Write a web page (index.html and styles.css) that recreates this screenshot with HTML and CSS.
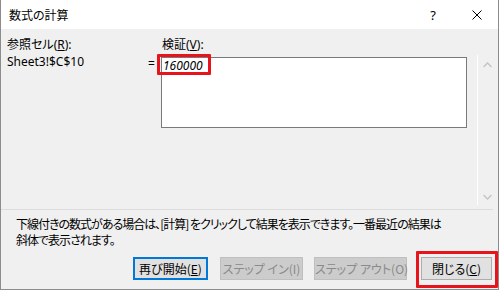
FILE: index.html
```html
<!DOCTYPE html>
<html lang="ja">
<head>
<meta charset="utf-8">
<title>数式の計算</title>
<link rel="stylesheet" href="styles.css">
</head>
<body>
<div class="window">
  <div class="titlebar">
    <span class="title">数式の計算</span>
    <span class="help">?</span>
    <span class="close">
      <svg width="10" height="10" viewBox="0 0 10 10"><path d="M0.5 0.5 L9.5 9.5 M9.5 0.5 L0.5 9.5" stroke="#000" stroke-width="1" fill="none"/></svg>
    </span>
  </div>
  <div class="content">
    <div class="top">
      <div class="ref">
        <div class="label">参照セル(<u>R</u>):</div>
        <div class="value">Sheet3!$C$10</div>
      </div>
      <div class="eq">=</div>
      <div class="eval">
        <div class="label lbl-eval">検証(<u>V</u>):</div>
        <div class="box">
          <span class="result">160000</span>
          <span class="mark mark-result"></span>
        </div>
      </div>
      <div class="scroll">
        <svg width="9" height="6" viewBox="0 0 9 6"><path d="M0.5 5 L4.5 1 L8.5 5" stroke="#c4c4c4" stroke-width="1.4" fill="none"/></svg>
        <svg width="9" height="6" viewBox="0 0 9 6"><path d="M0.5 1 L4.5 5 L8.5 1" stroke="#c4c4c4" stroke-width="1.4" fill="none"/></svg>
      </div>
    </div>
    <div class="sep"></div>
    <p class="desc">下線付きの数式がある場合は、[計算] をクリックして結果を表示できます。一番最近の結果は<br>斜体で表示されます。</p>
    <div class="buttons">
      <button class="btn btn-default btn-restart">再び開始(<u>E</u>)</button>
      <button class="btn btn-disabled btn-in">ステップ イン(I)</button>
      <button class="btn btn-disabled btn-out">ステップ アウト(O)</button>
      <button class="btn btn-close">閉じる(<u>C</u>)<span class="mark mark-close"></span></button>
    </div>
  </div>
</div>
</body>
</html>
```

FILE: styles.css
```css
html, body {
  margin: 0;
  padding: 0;
  background: #ffffff;
}

body {
  font-family: "Noto Sans", "Noto Sans CJK JP", sans-serif;
  font-size: 12px;
  color: #000;
  font-feature-settings: "palt";
}

.window {
  width: 499px;
  height: 290px;
  box-sizing: border-box;
  border-left: 1px solid #8c8c8c;
  border-right: 1px solid #8c8c8c;
  border-bottom: 1px solid #8c8c8c;
  display: flex;
  flex-direction: column;
  background: #f0f0f0;
}

.titlebar {
  height: 29px;
  flex: none;
  background: #ffffff;
  display: flex;
  align-items: center;
  padding-top: 1px;
  box-sizing: border-box;
}

.title {
  padding-left: 8px;
  font-family: "Noto Sans CJK JP", sans-serif;
  font-size: 12px;
  line-height: 16px;
}

.help {
  margin-left: auto;
  font-size: 13px;
  line-height: 16px;
}

.close {
  margin-left: 36px;
  margin-right: 16px;
  display: flex;
  width: 10px;
  height: 10px;
}

.content {
  flex: 1;
  padding: 8px 0 0 6px;
  display: flex;
  flex-direction: column;
}

.top {
  display: flex;
  height: 168px;
}

.label, .value {
  line-height: 16px;
  white-space: nowrap;
}

.ref {
  width: 141px;
}

.value {
  margin-top: 1px;
}

.eq {
  width: 13px;
  margin-top: 19px;
  line-height: 16px;
}

.eval {
  width: 306px;
}

.lbl-eval {
  padding-left: 1px;
}

.box {
  position: relative;
  margin-top: 4px;
  height: 71px;
  box-sizing: border-box;
  border: 1px solid #7a7a7a;
  background: #ffffff;
  padding: 1px 1px 0;
}

.result {
  display: block;
  font-style: italic;
  line-height: 14px;
}

.mark {
  position: absolute;
  box-sizing: border-box;
  border: 3px solid #e8141c;
  border-radius: 1px;
}

.mark-result {
  left: -5px;
  top: -4px;
  width: 54px;
  height: 21px;
}

.scroll {
  margin-left: 10px;
  margin-top: 18px;
  width: 17px;
  height: 150px;
  box-sizing: border-box;
  border-left: 1px solid #ffffff;
  display: flex;
  flex-direction: column;
  justify-content: space-between;
  align-items: center;
  padding: 7px 0 5px 2px;
}

.sep {
  height: 1px;
  margin: 4px 5px 0 -6px;
  background: #dcdcdc;
}

.desc {
  margin: 6px 0 0 9px;
  line-height: 16px;
  font-family: "Noto Sans CJK JP", sans-serif;
  letter-spacing: -1px;
  white-space: nowrap;
}

.buttons {
  display: flex;
  justify-content: flex-end;
  margin-top: 9px;
  padding-right: 6px;
}

.btn {
  height: 23px;
  box-sizing: border-box;
  padding: 0;
  font-family: "Noto Sans CJK JP", sans-serif;
  font-size: 12px;
  font-feature-settings: "palt";
  background: #e1e1e1;
  border: 1px solid #adadad;
  color: #000;
  line-height: 20px;
  white-space: nowrap;
}

.btn-default {
  border-color: #0078d7;
  box-shadow: inset 0 0 0 1px #0078d7;
}

.btn-disabled {
  background: #cccccc;
  border-color: #bfbfbf;
  color: #8a8a8a;
}

.btn-restart { width: 75px; }
.btn-in { width: 83px; margin-left: 12px; }
.btn-out { width: 93px; margin-left: 11px; }
.btn-close { width: 71px; margin-left: 14px; position: relative; }

.mark-close {
  left: -6px;
  top: -7px;
  right: -7px;
  bottom: -9px;
}
```
